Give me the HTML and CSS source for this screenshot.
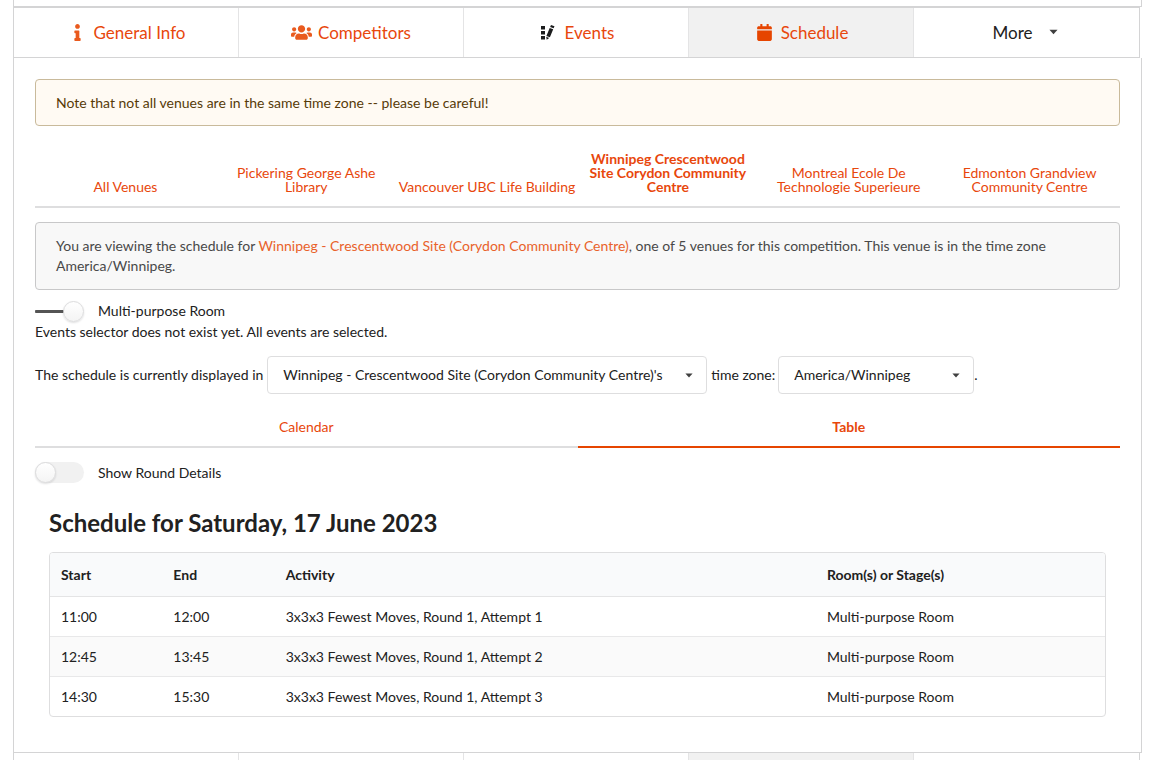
FILE: index.html
```html
<!DOCTYPE html>
<html lang="en">
<head>
<meta charset="utf-8">
<title>Competition schedule</title>
<link rel="stylesheet" href="styles.css">
</head>
<body>
<div class="panel-end"></div>
<nav class="menu">
  <a class="item" href="#info"><svg class="icon" viewBox="-224 0 640 512"><path d="M20 424.229h20V279.771H20c-11.046 0-20-8.954-20-20V212c0-11.046 8.954-20 20-20h112c11.046 0 20 8.954 20 20v212.229h20c11.046 0 20 8.954 20 20V492c0 11.046-8.954 20-20 20H20c-11.046 0-20-8.954-20-20v-47.771c0-11.046 8.954-20 20-20zM96 0C56.235 0 24 32.235 24 72s32.235 72 72 72 72-32.235 72-72S135.764 0 96 0z"/></svg>General Info</a>
  <a class="item" href="#competitors"><svg class="icon" viewBox="0 0 640 512"><path d="M96 224c35.3 0 64-28.7 64-64s-28.7-64-64-64-64 28.7-64 64 28.7 64 64 64zm448 0c35.3 0 64-28.7 64-64s-28.7-64-64-64-64 28.7-64 64 28.7 64 64 64zm32 32h-64c-17.6 0-33.5 7.1-45.1 18.6 40.3 22.1 68.9 62 75.1 109.4h66c17.7 0 32-14.3 32-32v-32c0-35.3-28.7-64-64-64zm-256 0c61.9 0 112-50.1 112-112S381.9 32 320 32 208 82.1 208 144s50.1 112 112 112zm76.8 32h-8.3c-20.8 10-43.9 16-68.5 16s-47.6-6-68.5-16h-8.3C179.6 288 128 339.6 128 403.2V432c0 26.5 21.5 48 48 48h288c26.5 0 48-21.5 48-48v-28.8c0-63.6-51.6-115.2-115.2-115.2zm-223.7-13.4C161.5 263.1 145.6 256 128 256H64c-35.3 0-64 28.7-64 64v32c0 17.7 14.3 32 32 32h65.9c6.3-47.4 34.9-87.3 75.2-109.4z"/></svg>Competitors</a>
  <a class="item" href="#events"><svg class="icon dark" viewBox="0 0 21 17"><path d="M3 2h4v3.500H3zM3 7h4v3.500H3zM3 12h4v3.500H3zM13 1l3.500 1.300-.9 2-3.500-1.300zM11.700 4l3.500 1.300-3.300 8-3.500-1.300zM8.200 12.700l3 1.200-2.500 1.900z"/></svg>Events</a>
  <a class="item active" href="#schedule"><svg class="icon" viewBox="-96 0 640 512"><path d="M12 192h424c6.600 0 12 5.400 12 12v260c0 26.500-21.500 48-48 48H48c-26.500 0-48-21.500-48-48V204c0-6.600 5.400-12 12-12zm436-44v-36c0-26.500-21.500-48-48-48h-48V12c0-6.600-5.400-12-12-12h-40c-6.600 0-12 5.400-12 12v52H160V12c0-6.600-5.400-12-12-12h-40c-6.600 0-12 5.400-12 12v52H48C21.500 64 0 85.500 0 112v36c0 6.600 5.400 12 12 12h424c6.600 0 12-5.400 12-12z"/></svg>Schedule</a>
  <button class="item more" type="button">More<svg class="caret" viewBox="0 0 10 6"><path d="M.5.500h9L5 5.500z"/></svg></button>
</nav>
<main class="panel">
  <div class="message warning">Note that not all venues are in the same time zone -- please be careful!</div>

  <nav class="tabs venues">
    <a class="tab" href="#all">All Venues</a>
    <a class="tab" href="#pickering">Pickering George Ashe Library</a>
    <a class="tab wide" href="#vancouver">Vancouver UBC Life Building</a>
    <a class="tab current" href="#winnipeg">Winnipeg Crescentwood Site Corydon Community Centre</a>
    <a class="tab" href="#montreal">Montreal Ecole De Technologie Superieure</a>
    <a class="tab" href="#edmonton">Edmonton Grandview Community Centre</a>
  </nav>

  <div class="message info">You are viewing the schedule for <a href="#map">Winnipeg - Crescentwood Site (Corydon Community Centre)</a>, one of 5 venues for this competition. This venue is in the time zone America/Winnipeg.</div>

  <div class="rooms">
    <label class="switch"><input class="slider" type="checkbox" checked>Multi-purpose Room</label>
    <div>Events selector does not exist yet. All events are selected.</div>
  </div>

  <div class="zone-row">
    <label for="venue">The schedule is currently displayed in</label>
    <span class="picker venue-picker">
      <select id="venue"><option>Winnipeg - Crescentwood Site (Corydon Community Centre)'s</option></select>
      <svg class="caret" viewBox="0 0 10 6"><path d="M.5.500h9L5 5.500z"/></svg>
    </span>
    <label for="zone">time zone:</label>
    <span class="picker zone-picker">
      <select id="zone"><option>America/Winnipeg</option></select>
      <svg class="caret" viewBox="0 0 10 6"><path d="M.5.500h9L5 5.500z"/></svg>
    </span>
    <span class="stop">.</span>
  </div>

  <nav class="tabs views">
    <a class="tab" href="#calendar">Calendar</a>
    <a class="tab current" href="#table">Table</a>
  </nav>

  <label class="switch details"><input class="toggle" type="checkbox">Show Round Details</label>

  <section class="day">
    <h2>Schedule for Saturday, 17 June 2023</h2>
    <table class="schedule">
      <thead>
        <tr><th class="time">Start</th><th class="time">End</th><th class="activity">Activity</th><th>Room(s) or Stage(s)</th></tr>
      </thead>
      <tbody>
        <tr><td>11:00</td><td>12:00</td><td>3x3x3 Fewest Moves, Round 1, Attempt 1</td><td>Multi-purpose Room</td></tr>
        <tr><td>12:45</td><td>13:45</td><td>3x3x3 Fewest Moves, Round 1, Attempt 2</td><td>Multi-purpose Room</td></tr>
        <tr><td>14:30</td><td>15:30</td><td>3x3x3 Fewest Moves, Round 1, Attempt 3</td><td>Multi-purpose Room</td></tr>
      </tbody>
    </table>
  </section>
</main>
<div class="menu menu-end">
  <span class="item"></span><span class="item"></span><span class="item"></span><span class="item active"></span><span class="item"></span>
</div>
</body>
</html>
```

FILE: styles.css
```css
*, *::before { box-sizing: border-box; }

body {
  margin: 0 9px 0 13px;
  background: #fff;
  color: #212121;
  font-family: Lato, "Liberation Sans", sans-serif;
  font-size: 14px;
  line-height: 20px;
}

a { color: #e8470c; text-decoration: none; }

button, select, input { font: inherit; color: inherit; }

.panel-end {
  height: 7px;
  border: 1px solid #d4d4d5;
  border-top: 0;
}

.menu {
  display: grid;
  grid-template-columns: repeat(5, 1fr);
  margin-right: 2px;
  border: 1px solid #d4d4d5;
  font-size: 17px;
}

.item {
  display: flex;
  align-items: center;
  justify-content: center;
  padding: 15px 20px 14px;
  border: 0;
  border-right: 1px solid #e4e4e5;
  background: transparent;
}

.item:last-child { border-right: 0; }
.item.active { background: #f1f1f1; }
.item.more { cursor: pointer; }

.icon {
  width: 21px;
  height: 17px;
  margin: 0 6px 2px 0;
  fill: #e95a1e;
}

.active .icon { fill: #e64500; }
.icon.dark { fill: #1b1c1d; }

.caret { width: 9px; height: 6px; fill: #404040; }
.more .caret { margin: 0 2px 2px 17px; }

.menu-end { border-top: 0; border-bottom: 0; }
.menu-end .item { padding: 0; min-height: 7px; }

.panel {
  padding: 21px 21px 35px;
  border: 1px solid #d4d4d5;
  border-top: 0;
}

.message {
  padding: 13px 20px;
  border: 1px solid;
  border-radius: 4px;
}

.warning {
  border-color: #c9ba9b;
  background: #fffaf3;
  color: #573a08;
  line-height: 19px;
}

.info {
  border-color: #c8c8c9;
  background: #f8f8f8;
  color: #484848;
}

.info a { color: #e9622b; }

.tabs {
  display: grid;
  line-height: 14px;
  text-align: center;
}

.tab {
  display: flex;
  align-items: flex-end;
  justify-content: center;
  padding: 12px;
  border-bottom: 2px solid #dededf;
}

.tab.wide { padding: 12px 2px; }
.tab.current { font-weight: 700; }

.venues {
  grid-template-columns: repeat(6, 1fr);
  margin: 14px 0;
}

.views { grid-template-columns: repeat(2, 1fr); margin-top: 14px; }
.views .current { border-bottom-color: #e64500; }

.rooms { margin-top: 11px; }
.rooms .switch { align-items: flex-start; }

.switch {
  display: flex;
  align-items: center;
  gap: 14px;
  width: fit-content;
}

.slider, .toggle {
  appearance: none;
  display: flex;
  align-items: center;
  width: 49px;
  height: 21px;
  margin: 0;
  border-radius: 11px;
}

.slider {
  justify-content: flex-end;
  background: linear-gradient(#545454, #545454) no-repeat left center / 40px 3px;
}

.toggle { background: #f1f1f1; }

.slider::before, .toggle::before {
  content: "";
  width: 21px;
  height: 21px;
  border: 1px solid #dcdcdd;
  border-radius: 50%;
  background: linear-gradient(#fff, #f4f4f4);
  box-shadow: 0 1px 2px rgba(34, 36, 38, 0.15);
}

.zone-row {
  display: flex;
  align-items: center;
  gap: 4px;
  margin-top: 14px;
}

.zone-picker { margin-left: -1px; }
.stop { margin-left: -4px; }

.picker { display: grid; align-items: center; }
.picker > * { grid-area: 1 / 1; }
.picker .caret { justify-self: end; width: 8px; height: 5px; margin-right: 14px; pointer-events: none; }
.venue-picker { width: 440px; }
.zone-picker { width: 196px; }

.picker select {
  appearance: none;
  width: 100%;
  height: 38px;
  padding: 0 32px 0 15px;
  border: 1px solid #dededf;
  border-radius: 4px;
  background: #fff;
}

.details { margin-top: 14px; }

.day { margin-top: 24px; padding: 0 14px; }

.day h2 {
  margin: 0 0 14px;
  font-size: 24px;
  line-height: 31px;
}

.schedule {
  width: 100%;
  table-layout: fixed;
  border: 1px solid #dededf;
  border-radius: 4px;
  border-collapse: separate;
  border-spacing: 0;
  overflow: hidden;
}

.schedule th, .schedule td { padding: 10px 11px 9px; text-align: left; }
.schedule th { padding: 12px 11px 11px; background: #f9fafb; border-bottom: 1px solid #e4e4e5; }
.schedule td { border-bottom: 1px solid #e8e8e9; }
.schedule tr:last-child td { border-bottom: 0; }
.schedule tr:nth-child(even) td { background: #fafafa; }
.schedule .time { width: 10.65%; }
.schedule .activity { width: 51.3%; }
```
